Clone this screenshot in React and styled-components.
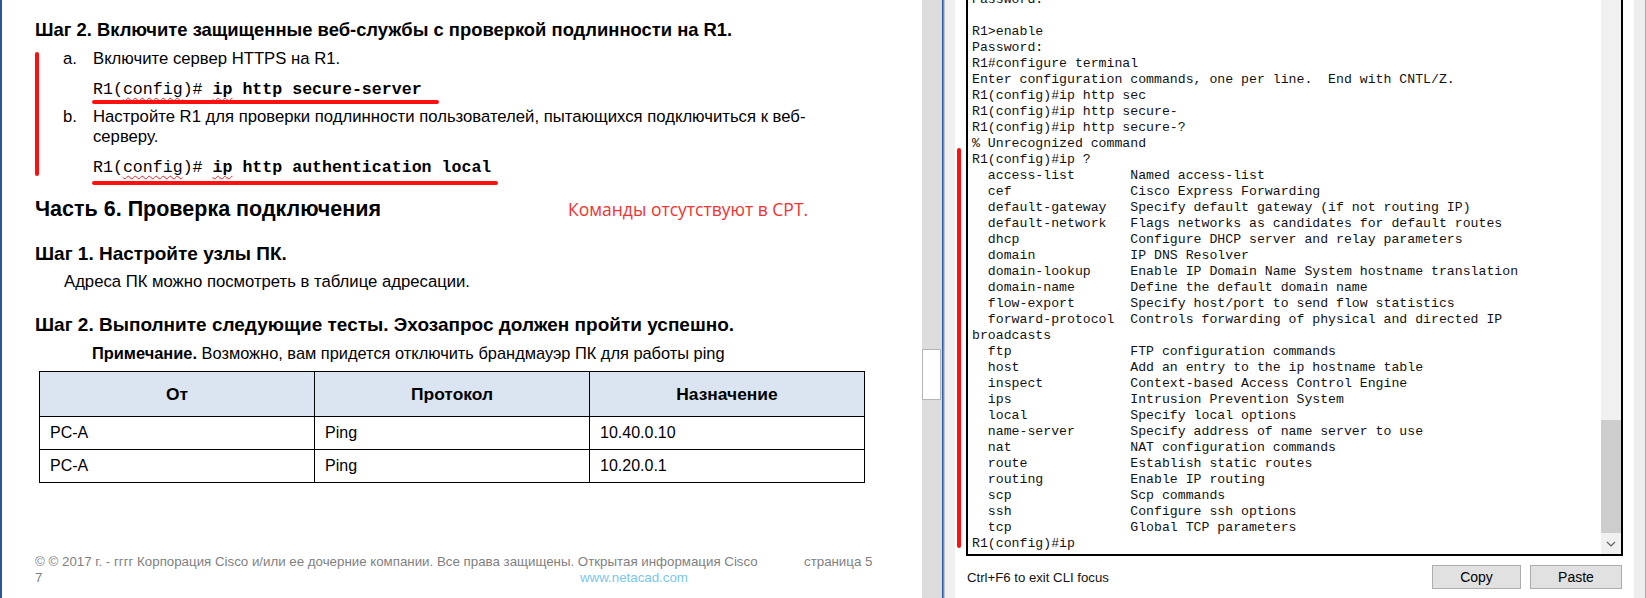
import React from "react";
import styled, { createGlobalStyle } from "styled-components";

const Global = createGlobalStyle`
  html, body { margin: 0; padding: 0; height: 598px; overflow: hidden; background: #fff; }
  #root { height: 598px; }
`;

const Screen = styled.div`
  display: flex;
  width: 1646px;
  height: 598px;
  overflow: hidden;
  font-family: "Liberation Sans", Arial, sans-serif;
  color: #000;
`;

/* ---------- document pane ---------- */
const DocPane = styled.div`
  position: relative;
  flex: 0 0 922px;
  box-sizing: border-box;
  border-left: 2px solid #2b5797;
  padding: 20px 0 0 33px;
  overflow: hidden;
  background: #fff;
`;

const StepHeading = styled.div`
  font-size: ${(p) => p.$size || 19}px;
  font-weight: bold;
  line-height: 20px;
  margin-top: ${(p) => p.$mt || 0}px;
  white-space: nowrap;
`;

const PartRow = styled.div`
  display: grid;
  grid-template-columns: 533px auto;
  align-items: center;
  margin-top: 18px;
  line-height: 26px;
`;

const PartHeading = styled.div`
  font-size: 21.5px;
  font-weight: bold;
  white-space: nowrap;
`;

const RedNote = styled.div`
  font-size: 17.5px;
  color: #f03434;
  font-family: "Open Sans", "Liberation Sans", sans-serif;
  white-space: nowrap;
`;

const Item = styled.div`
  display: grid;
  grid-template-columns: 30px 1fr;
  padding-left: 28px;
  font-size: 16.7px;
  line-height: 20px;
  margin-top: ${(p) => p.$mt || 0}px;
`;

const Marker = styled.span``;

const Para = styled.div`
  font-size: ${(p) => p.$size || 16.7}px;
  line-height: 20px;
  padding-left: ${(p) => p.$indent || 0}px;
  margin-top: ${(p) => p.$mt || 0}px;
  white-space: nowrap;
`;

const Cmd = styled.div`
  font-family: "Liberation Mono", "Courier New", monospace;
  font-size: 16.6px;
  line-height: 20px;
  padding-left: 58px;
  margin-top: 11px;
  white-space: pre;
`;

const CmdBold = styled.b`
  font-weight: bold;
`;

const Spell = styled.span`
  text-decoration: underline wavy #e42222;
  text-decoration-thickness: 1px;
  text-underline-offset: 3px;
`;

const Table = styled.table`
  border-collapse: collapse;
  width: 826px;
  margin: 8px 0 0 4px;
  table-layout: fixed;
  font-family: "Liberation Sans", Arial, sans-serif;
  font-size: 16px;
`;

const Th = styled.th`
  background: #dbe5f1;
  border: 1px solid #000;
  height: 44px;
  font-weight: bold;
  font-size: 17.4px;
  text-align: center;
  padding: 0;
`;

const Td = styled.td`
  border: 1px solid #000;
  height: 32px;
  padding: 0 0 0 10px;
  text-align: left;
`;

const Footer = styled.div`
  display: grid;
  grid-template-columns: 545px 224px auto;
  margin-top: 71px;
  font-family: "Liberation Sans", Arial, sans-serif;
  font-size: 13.3px;
  line-height: 16px;
  color: #7f7f7f;
  white-space: nowrap;
`;

const FooterWide = styled.span`
  grid-column: 1 / span 2;
`;

const Link = styled.span`
  color: #7cc6ec;
`;

const Mark = styled.div`
  position: absolute;
  background: #ff1010;
  border-radius: 2px;
`;

/* ---------- doc scrollbar & divider ---------- */
const DocScroll = styled.div`
  flex: 0 0 20px;
  background: #dcdcdc;
  display: flex;
  flex-direction: column;
`;

const DocThumb = styled.div`
  margin-top: 349px;
  height: 51px;
  width: 19px;
  box-sizing: border-box;
  background: #fff;
  border: 1px solid #b4b4b4;
`;

const Divider = styled.div`
  flex: 0 0 3px;
  background: linear-gradient(to right, #2f5ca8 0 1px, #8a8a8a 1px 2px, #c4c4c4 2px 3px);
`;

/* ---------- CLI pane ---------- */
const CliPane = styled.div`
  position: relative;
  flex: 1;
  display: flex;
`;

const Gutter = styled.div`
  flex: 0 0 10px;
  background: #f0f0f0;
`;

const EdgeGutter = styled.div`
  flex: 0 0 11px;
  background: #eeeeee;
  border-right: 1px solid #a8a8a8;
`;

const CliMain = styled.div`
  flex: 1;
  display: flex;
  flex-direction: column;
  padding: 0 11px;
  background: #fff;
`;

const Terminal = styled.div`
  height: 556px;
  flex: 0 0 556px;
  box-sizing: border-box;
  border: 2px solid #000;
  border-top: none;
  display: flex;
  overflow: hidden;
`;

const TermText = styled.div`
  flex: 1;
  padding-left: 4px;
  overflow: hidden;
`;

const TermLines = styled.pre`
  margin: -8px 0 0 0;
  font-family: "Liberation Mono", "Courier New", monospace;
  font-size: 13.2px;
  line-height: 16px;
  color: #111;
`;

const TermScroll = styled.div`
  flex: 0 0 20px;
  background: #f0f0f0;
  display: flex;
  flex-direction: column;
  align-items: center;
`;

const TermThumb = styled.div`
  margin-top: 420px;
  height: 113px;
  width: 100%;
  background: #cdcdcd;
`;

const ArrowBox = styled.div`
  flex: 1;
  display: flex;
  align-items: center;
  justify-content: center;
`;

const BottomBar = styled.div`
  flex: 1;
  display: flex;
  align-items: center;
  padding: 0 1px;
  gap: 9px;
`;

const Hint = styled.span`
  font-family: "Liberation Sans", Arial, sans-serif;
  font-size: 13.2px;
  color: #111;
  margin-right: auto;
`;

const Button = styled.button`
  width: ${(p) => p.$w}px;
  height: 24px;
  box-sizing: border-box;
  background: #e1e1e1;
  border: 1px solid #adadad;
  font-family: "Liberation Sans", Arial, sans-serif;
  font-size: 14px;
  color: #000;
  padding: 0;
`;

const terminalText = `Password:

R1>enable
Password:
R1#configure terminal
Enter configuration commands, one per line.  End with CNTL/Z.
R1(config)#ip http sec
R1(config)#ip http secure-
R1(config)#ip http secure-?
% Unrecognized command
R1(config)#ip ?
  access-list       Named access-list
  cef               Cisco Express Forwarding
  default-gateway   Specify default gateway (if not routing IP)
  default-network   Flags networks as candidates for default routes
  dhcp              Configure DHCP server and relay parameters
  domain            IP DNS Resolver
  domain-lookup     Enable IP Domain Name System hostname translation
  domain-name       Define the default domain name
  flow-export       Specify host/port to send flow statistics
  forward-protocol  Controls forwarding of physical and directed IP
broadcasts
  ftp               FTP configuration commands
  host              Add an entry to the ip hostname table
  inspect           Context-based Access Control Engine
  ips               Intrusion Prevention System
  local             Specify local options
  name-server       Specify address of name server to use
  nat               NAT configuration commands
  route             Establish static routes
  routing           Enable IP routing
  scp               Scp commands
  ssh               Configure ssh options
  tcp               Global TCP parameters
R1(config)#ip`;

const rows = [
  ["PC-A", "Ping", "10.40.0.10"],
  ["PC-A", "Ping", "10.20.0.1"],
];

export default function App() {
  return (
    <>
      <Global />
      <Screen>
        <DocPane>
          <StepHeading $size={18.4}>Шаг 2. Включите защищенные веб-службы с проверкой подлинности на R1.</StepHeading>
          <Item $mt={9}>
            <Marker>a.</Marker>
            <span>Включите сервер HTTPS на R1.</span>
          </Item>
          <Cmd>
            R1(<Spell>config</Spell>)# <CmdBold><Spell>ip</Spell> http secure-server</CmdBold>
          </Cmd>
          <Item $mt={7}>
            <Marker>b.</Marker>
            <span>
              Настройте R1 для проверки подлинности пользователей, пытающихся подключиться к веб-
              <br />
              серверу.
            </span>
          </Item>
          <Cmd>
            R1(<Spell>config</Spell>)# <CmdBold><Spell>ip</Spell> http authentication local</CmdBold>
          </Cmd>
          <PartRow>
            <PartHeading>Часть 6. Проверка подключения</PartHeading>
            <RedNote>Команды отсутствуют в CPT.</RedNote>
          </PartRow>
          <StepHeading $mt={22}>Шаг 1. Настройте узлы ПК.</StepHeading>
          <Para $indent={29} $mt={8}>Адреса ПК можно посмотреть в таблице адресации.</Para>
          <StepHeading $mt={23}>Шаг 2. Выполните следующие тесты. Эхозапрос должен пройти успешно.</StepHeading>
          <Para $indent={57} $mt={8} $size={16.4}>
            <b>Примечание.</b> Возможно, вам придется отключить брандмауэр ПК для работы ping
          </Para>
          <Table>
            <thead>
              <tr>
                <Th>От</Th>
                <Th>Протокол</Th>
                <Th>Назначение</Th>
              </tr>
            </thead>
            <tbody>
              {rows.map((r, i) => (
                <tr key={i}>
                  {r.map((c, j) => (
                    <Td key={j}>{c}</Td>
                  ))}
                </tr>
              ))}
            </tbody>
          </Table>
          <Footer>
            <FooterWide>© © 2017 г. - гггг Корпорация Cisco и/или ее дочерние компании. Все права защищены. Открытая информация Cisco</FooterWide>
            <span>страница 5</span>
            <span>7</span>
            <Link>www.netacad.com</Link>
            <span />
          </Footer>
          <Mark style={{ left: 33, top: 52, width: 4, height: 124 }} />
          <Mark style={{ left: 90, top: 100, width: 347, height: 3.5 }} />
          <Mark style={{ left: 90, top: 181, width: 406, height: 3.5 }} />
        </DocPane>
        <DocScroll>
          <DocThumb />
        </DocScroll>
        <Divider />
        <CliPane>
          <Gutter />
          <CliMain>
            <Terminal>
              <TermText>
                <TermLines>{terminalText}</TermLines>
              </TermText>
              <TermScroll>
                <TermThumb />
                <ArrowBox>
                  <svg width="10" height="6" viewBox="0 0 10 6">
                    <path d="M1 1 L5 5 L9 1" fill="none" stroke="#606060" strokeWidth="1.2" />
                  </svg>
                </ArrowBox>
              </TermScroll>
            </Terminal>
            <BottomBar>
              <Hint>Ctrl+F6 to exit CLI focus</Hint>
              <Button $w={89}>Copy</Button>
              <Button $w={92}>Paste</Button>
            </BottomBar>
          </CliMain>
          <EdgeGutter />
          <Mark style={{ left: 12, top: 148, width: 4, height: 400 }} />
        </CliPane>
      </Screen>
    </>
  );
}
